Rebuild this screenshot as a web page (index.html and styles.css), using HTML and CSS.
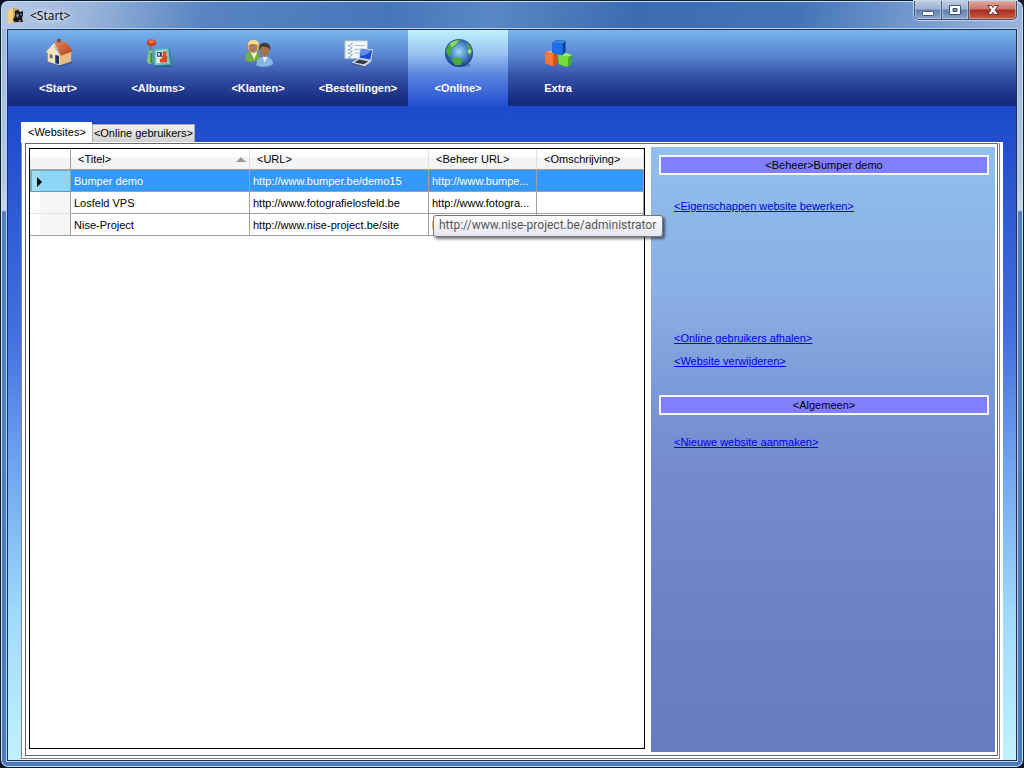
FILE: index.html
```html
<!DOCTYPE html>
<html lang="nl">
<head>
<meta charset="utf-8">
<title>&lt;Start&gt;</title>
<link rel="stylesheet" href="styles.css">
</head>
<body>
<div class="window">
  <header class="titlebar">
    <svg class="app-icon" viewBox="0 0 16 16" aria-hidden="true">
      <path d="M0 2 5 0v14L0 16z" fill="#f0cf84"/><path d="M5 0 11 1v13l-6 1z" fill="#caa057"/>
      <path d="M7 3 10 2l2 2 3-1v4l-1 3 1 4H7L5 12 7 8z" fill="#15151a"/>
      <path d="M9 5l2 2-1 3-2-2zM12 5l2 1-1 2z" fill="#8b8c95"/><path d="M10 12h3l-1 3z" fill="#cf668c"/>
    </svg>
    <h1 class="title">&lt;Start&gt;</h1>
    <div class="controls">
      <button class="control" aria-label="Minimaliseren"><svg width="14" height="12" viewBox="0 0 14 12"><rect x="1.5" y="7.500" width="11" height="4" rx="1" fill="#fff" stroke="#46536b"/></svg></button>
      <button class="control" aria-label="Maximaliseren"><svg width="12" height="10" viewBox="0 0 12 10"><path d="M.5.5h11v9H.5zM4 3.500v3h4v-3z" fill="#fff" fill-rule="evenodd" stroke="#46536b"/></svg></button>
      <button class="control control-close" aria-label="Sluiten"><svg width="12" height="10" viewBox="0 0 12 10"><path d="M.7.500h3.600L6 2.600 7.700.5h3.600L8 5l3.300 4.500H7.700L6 7.400 4.300 9.500H.7L4 5z" fill="#fff" stroke="#5d3b42"/></svg></button>
    </div>
  </header>
  <div class="client">
    <nav class="toolbar">
      <button class="tool">
        <svg viewBox="0 0 32 32"><defs><linearGradient id="roof" x2="1" y2="1"><stop stop-color="#e58a52"/><stop offset="1" stop-color="#b03c18"/></linearGradient></defs>
          <path d="M15 28 28 24 31 27 17 31z" fill="#26386b" opacity=".4"/>
          <path d="M14 1h4v6h-4z" fill="#94452b"/><path d="M4 14 10 8 17 18v11L4 25z" fill="#f8e2b8"/><path d="M17 17 29 13v12l-12 4z" fill="#e6bd86"/>
          <path d="M11 5 23 4 31 14 18 19z" fill="url(#roof)"/><path d="M11 5 2 15l1 1 8-8 7 11z" fill="#f3dcc4"/>
          <path d="M12 18l4 1v9l-4-1z" fill="#173563"/><path d="M6 17l3 1v4l-3-1z" fill="#54718d"/></svg>
        <span>&lt;Start&gt;</span>
      </button>
      <button class="tool">
        <svg viewBox="0 0 32 32">
          <path d="M12 29h19l-2 2H12z" fill="#1b3763" opacity=".4"/>
          <path d="M6 8h2v12H6z" fill="#4f973b"/><path d="M5 13h4l1 11q0 4-3 4t-4-4z" fill="#7dc473"/><path d="M7 16h2v11H7z" fill="#398343"/>
          <ellipse cx="8" cy="5" rx="5" ry="3.500" fill="#ca3b21"/><path d="M4 4q4-4 8 0L8 6z" fill="#f37344"/>
          <path d="M11 12 27 11 31 29 11 30z" fill="#2f878f"/><path d="M11 12 26 11 28 28 11 29z" fill="#6fc3c4"/><path d="M13 14l11-1 2 13-13 1z" fill="#dfebdf"/>
          <path d="M14 15h5v5h-5z" fill="#263b65"/><path d="M15 16h2v3h-2z" fill="#cfe2ea"/><path d="M20 14h4v5h-4zM17 22h8v4h-8zM19 19h6v4h-6z" fill="#d94c26"/></svg>
        <span>&lt;Albums&gt;</span>
      </button>
      <button class="tool">
        <svg viewBox="0 0 32 32"><path d="M1 22q0-8 8-8t8 9q-8 4-16 1z" fill="#78ad42"/><path d="M7 15l4 8 3-8z" fill="#eef0dd"/>
          <ellipse cx="10" cy="9" rx="6" ry="7" fill="#dfb65e"/><path d="M5 8q4-4 9 0v4q-4 7-8 1z" fill="#aa7b63"/><path d="M4 8q0-6 6-6t6 5l-8-1z" fill="#f5db91"/>
          <path d="M13 29q0-9 9-9t9 8q-9 5-18 1z" fill="#86b7e6"/><path d="M20 20l2 6 3-6z" fill="#eef7fb"/>
          <ellipse cx="22" cy="13" rx="5" ry="7" fill="#a3744e"/><path d="M16 13q-1-8 6-8t6 8l-2-3-7-1z" fill="#413a37"/></svg>
        <span>&lt;Klanten&gt;</span>
      </button>
      <button class="tool">
        <svg viewBox="0 0 32 32"><path d="M1 3h24v19H1z" fill="#f6f9fb" stroke="#adbdc9"/><path d="M11 8h11M11 12h11M11 16h8" stroke="#a4b8c8"/>
          <path d="M4 8l2 1 3-4M4 12l2 1 3-4M4 16l2 1 3-4M4 20l2 1 3-4" fill="none" stroke="#4192c6"/>
          <path d="M17 11l14 1-2 13-14-3z" fill="#c7d7e2"/><path d="M18 12l12 1-2 10-11-2z" fill="#214acb"/><path d="M18 12l12 1-7 5-5 1z" fill="#688aee"/>
          <path d="M8 26l7-4 14 3-7 5z" fill="#dae0e3"/><path d="M11 26l5-3 10 2-5 3z" fill="#333a46"/><path d="M8 27l14 3v1L8 28z" fill="#4d596b"/></svg>
        <span>&lt;Bestellingen&gt;</span>
      </button>
      <button class="tool tool-active" aria-current="page">
        <svg viewBox="0 0 32 32"><defs><radialGradient id="sea" cx=".5" cy=".45" r=".55"><stop stop-color="#a8d9f5"/><stop offset=".5" stop-color="#4f8fd2"/><stop offset="1" stop-color="#153b83"/></radialGradient></defs>
          <ellipse cx="19" cy="29" rx="10" ry="2" fill="#28438a" opacity=".4"/><circle cx="16" cy="16" r="15" fill="url(#sea)"/>
          <path d="M3 11Q8 1 18 2l-3 3-3 0 1 3-4 3-2 4 1 3-3 1-3-4z" fill="#49a83b"/><path d="M6 6q5-4 9-3l-2 3-5 4z" fill="#91d76f"/>
          <path d="M24 5q5 4 6 9l-2 5-3-4 1-3-2-3zM8 22l6-2 6 4-3 5-5 0z" fill="#4dac35"/><path d="M26 12l3 1-1 4-3-2z" fill="#b5dc74"/></svg>
        <span>&lt;Online&gt;</span>
      </button>
      <button class="tool">
        <svg viewBox="0 0 32 32"><path d="M1 15l8-2 5 2v13l-5 2-8-3z" fill="#db4925"/><path d="M1 15l8-2 5 2-4 2z" fill="#f5a071"/><path d="M1 15l9 2v13l-9-3z" fill="#fa7540"/>
          <path d="M15 18l8-2 7 2-1 10-4 3-9-3z" fill="#45ae27"/><path d="M15 18l8-2 7 2-4 2z" fill="#a2ed70"/><path d="M15 18l11 2-1 11-9-3z" fill="#77dc3c"/>
          <path d="M9 5l4-3 10 1v12l-3 3-11-2z" fill="#073f9f"/><path d="M9 5l11 1v12L9 16z" fill="#1c70ed"/><path d="M9 5l4-3 10 1-3 3z" fill="#3a83e0"/></svg>
        <span>Extra</span>
      </button>
    </nav>
    <main class="workspace">
      <div class="tabs" role="tablist">
        <button class="tab tab-active" role="tab" aria-selected="true">&lt;Websites&gt;</button>
        <button class="tab" role="tab" aria-selected="false">&lt;Online gebruikers&gt;</button>
      </div>
      <div class="sheet">
        <div class="pane">
          <div class="page">
            <div class="grid">
              <table class="sites">
                <colgroup><col class="col-mark"><col class="col-title"><col class="col-url"><col class="col-admin"><col></colgroup>
                <thead>
                  <tr><th></th><th><span class="sorted">&lt;Titel&gt;<i class="sort"></i></span></th><th>&lt;URL&gt;</th><th>&lt;Beheer URL&gt;</th><th>&lt;Omschrijving&gt;</th></tr>
                </thead>
                <tbody>
                  <tr class="selected"><td class="mark"><i class="pointer"></i></td><td>Bumper demo</td><td>http://www.bumper.be/demo15</td><td>http://www.bumpe...</td><td></td></tr>
                  <tr><td class="mark"></td><td>Losfeld VPS</td><td>http://www.fotografielosfeld.be</td><td>http://www.fotogra...</td><td></td></tr>
                  <tr><td class="mark"></td><td>Nise-Project</td><td>http://www.nise-project.be/site</td><td class="hovered">h<div class="tooltip" role="tooltip">http://www.nise-project.be/administrator</div></td><td></td></tr>
                </tbody>
              </table>
            </div>
            <aside class="side">
              <section class="group group-manage">
                <h2 class="caption">&lt;Beheer&gt;Bumper demo</h2>
                <a class="link link-edit" href="#">&lt;Eigenschappen website bewerken&gt;</a>
                <a class="link" href="#">&lt;Online gebruikers afhalen&gt;</a>
                <a class="link" href="#">&lt;Website verwijderen&gt;</a>
              </section>
              <section class="group group-general">
                <h2 class="caption">&lt;Algemeen&gt;</h2>
                <a class="link" href="#">&lt;Nieuwe website aanmaken&gt;</a>
              </section>
            </aside>
          </div>
        </div>
      </div>
    </main>
  </div>
</div>
</body>
</html>
```
FILE: styles.css
```css
* { box-sizing: border-box; }
html, body { height: 100%; }
body {
  margin: 0;
  background: #0c1424;
  font: 11px/13px "Liberation Sans", Arial, sans-serif;
  color: #000;
}
button { margin: 0; padding: 0; border: 0; font: inherit; color: inherit; }

.window {
  display: flex;
  flex-direction: column;
  height: 100%;
  min-height: 480px;
  padding: 0 6px 5px 5px;
  border: 1px solid #111b30;
  border-radius: 8px;
  box-shadow: inset 0 0 0 1px #c4e0f5;
  background:
    linear-gradient(100deg, #b4c9e5 0, #9db7dc 8%, #5884c2 20%, #4676ba 38%, #5a87c4 48%, #3b6cb2 62%, #4474b8 78%, #6f96cd 88%, #9db5da 100%) top / 100% 28px no-repeat,
    linear-gradient(#9db4da 0, #b7c8e3 180px, #cbd7ea 209px, #5580bf 211px, #4b79bf 100%);
}

.titlebar { display: flex; align-items: flex-start; height: 27px; padding-left: 2px; }
.app-icon { width: 16px; height: 16px; margin-top: 7px; }
.title {
  flex: 1;
  margin: 6px 0 0 6px;
  font: 12px/18px "Open Sans", "Noto Sans", sans-serif;
  text-shadow: 0 0 6px #fff, 0 0 10px #fff;
}
.controls {
  display: flex;
  height: 19px;
  border: 1px solid #3d4c69;
  border-top: 0;
  border-radius: 0 0 5px 5px;
  overflow: hidden;
  box-shadow: 0 0 0 1px #c2d4ec;
}
.control {
  display: flex;
  align-items: center;
  justify-content: center;
  width: 27px;
  border-right: 1px solid #47597c;
  background: linear-gradient(#bdcce2 0, #9cb1d1 45%, #5f7faf 50%, #8ba7cf 100%);
  box-shadow: inset 0 0 0 1px #cbd7e999;
}
.control-close { width: 47px; border-right: 0; background: linear-gradient(#dfa79c 0, #cb7467 45%, #a92a1c 50%, #ca5f48 100%); box-shadow: inset 0 0 0 1px #edb6a899; }

.client {
  display: flex;
  flex: 1;
  flex-direction: column;
  min-height: 0;
  margin: 1px 0 1px 1px;
  border: 1px solid #1d3153;
  box-shadow: 0 0 0 1px #b9d5f0;
  background: linear-gradient(#1c4ac8 10%, #2551cf 17%, #446fde 42%, #6a9cee 57%, #a0dafb 80%, #bff1ff 100%);
}

.toolbar { display: flex; height: 76px; flex: none; background: linear-gradient(#79b4ef 0, #5a87d1 32%, #334ea6 63%, #142b7e 94%, #142b7e 100%); }
.tool {
  display: flex;
  flex-direction: column;
  align-items: center;
  width: 100px;
  padding-top: 8px;
  background: none;
  color: #fff;
  font-weight: bold;
}
.tool svg { width: 30px; height: 30px; margin: 0 0 14px 2px; }
.tool-active { background: linear-gradient(#bff1ff 0, #9bc4f3 30%, #5a82e0 60%, #2150cf 100%); }

.workspace { display: flex; flex: 1; flex-direction: column; min-height: 0; padding: 16px 13px 0; }
.tabs { display: flex; align-items: flex-end; }
.tab { height: 18px; padding: 0 1px; border: 1px solid #a8a8a8; border-bottom: 0; background: linear-gradient(#f1f1f1, #d2d2d2); }
.tab-active { height: 20px; padding: 0 5px 0 6px; border-color: #fff; background: #fff; }

.sheet { flex: 1; min-height: 0; padding: 1px 3px 1px 0; background: #fff; }
.pane { height: 100%; padding: 0 1px 2px 3px; border: 1px solid #858585; border-top: 0; }
.page { display: flex; gap: 6px; height: 100%; padding: 3px 2px 3px 3px; border: 1px solid #686868; }

.grid { flex: 1; min-width: 0; margin-bottom: 3px; border: 1px solid #000; margin-top: 1px; background: #fff; }
.sites { width: 100%; table-layout: fixed; border-collapse: separate; border-spacing: 0; }
.col-mark { width: 41px; }
.col-title, .col-url { width: 179px; }
.col-admin { width: 108px; }
.sites th {
  height: 21px;
  padding: 1px 8px 0 7px;
  border-right: 1px solid #e0e3e6;
  border-bottom: 1px solid #a0a0a0;
  background: linear-gradient(#fff 40%, #f2f3f5 45%, #f4f5f7);
  font-weight: normal;
  text-align: left;
  white-space: nowrap;
}
.sites th:first-child { border-right-color: #a0a0a0; }
.sorted { display: flex; align-items: center; justify-content: space-between; margin-right: -5px; }
.sort { border: 5px solid transparent; border-top: 0; border-bottom: 5px solid #999; }
.sites td {
  height: 22px;
  padding: 2px 2px 0 3px;
  border-right: 1px solid #a0a0a0;
  border-bottom: 1px solid #a0a0a0;
  white-space: nowrap;
}
.sites .selected td { background: #3399ff; color: #fff; }
.sites .mark { border-bottom-color: #e1e4e8; background: linear-gradient(90deg, #fff 10px, #f5f6f8 11px); padding-left: 7px; }
.sites tr:last-child .mark { border-bottom-color: #a0a0a0; }
.sites .selected .mark { background: linear-gradient(90deg, #a4dcf4 9px, #8dd6f7 10px); box-shadow: inset 2px 1px #71adc5; border-bottom-color: #5a9fbf; }
.pointer { display: block; width: 5px; border: 5px solid transparent; border-right: 0; border-left: 5px solid #000; }

.hovered { position: relative; }
.tooltip {
  position: absolute;
  z-index: 2;
  top: 1px;
  left: 4px;
  padding: 1px 6px 2px 5px;
  border: 1px solid #767676;
  border-radius: 3px;
  background: linear-gradient(#fff, #e4e5f0);
  box-shadow: 2px 2px 3px #0008;
  color: #575757;
  font: 12px/17px Roboto, "Noto Sans", sans-serif;
}

.side { width: 344px; flex: none; padding: 8px 6px 0 8px; background: linear-gradient(#91bfed 0, #8aaee4 25%, #7a97d7 42%, #758bd0 52%, #6c80c5 78%, #697bc0 100%); }
.group { display: flex; flex-direction: column; align-items: flex-start; }
.group-manage { gap: 10px; margin-bottom: 27px; }
.group-general { gap: 6px; }
.caption { width: 100%; margin: 0 0 15px; padding: 2px 0 1px; border: 2px solid #f5f5ff; background: #8080ff; font: inherit; text-align: center; }
.link { margin-left: 15px; color: #0000e8; text-decoration: underline; }
.link-edit { margin-bottom: 109px; }
```
